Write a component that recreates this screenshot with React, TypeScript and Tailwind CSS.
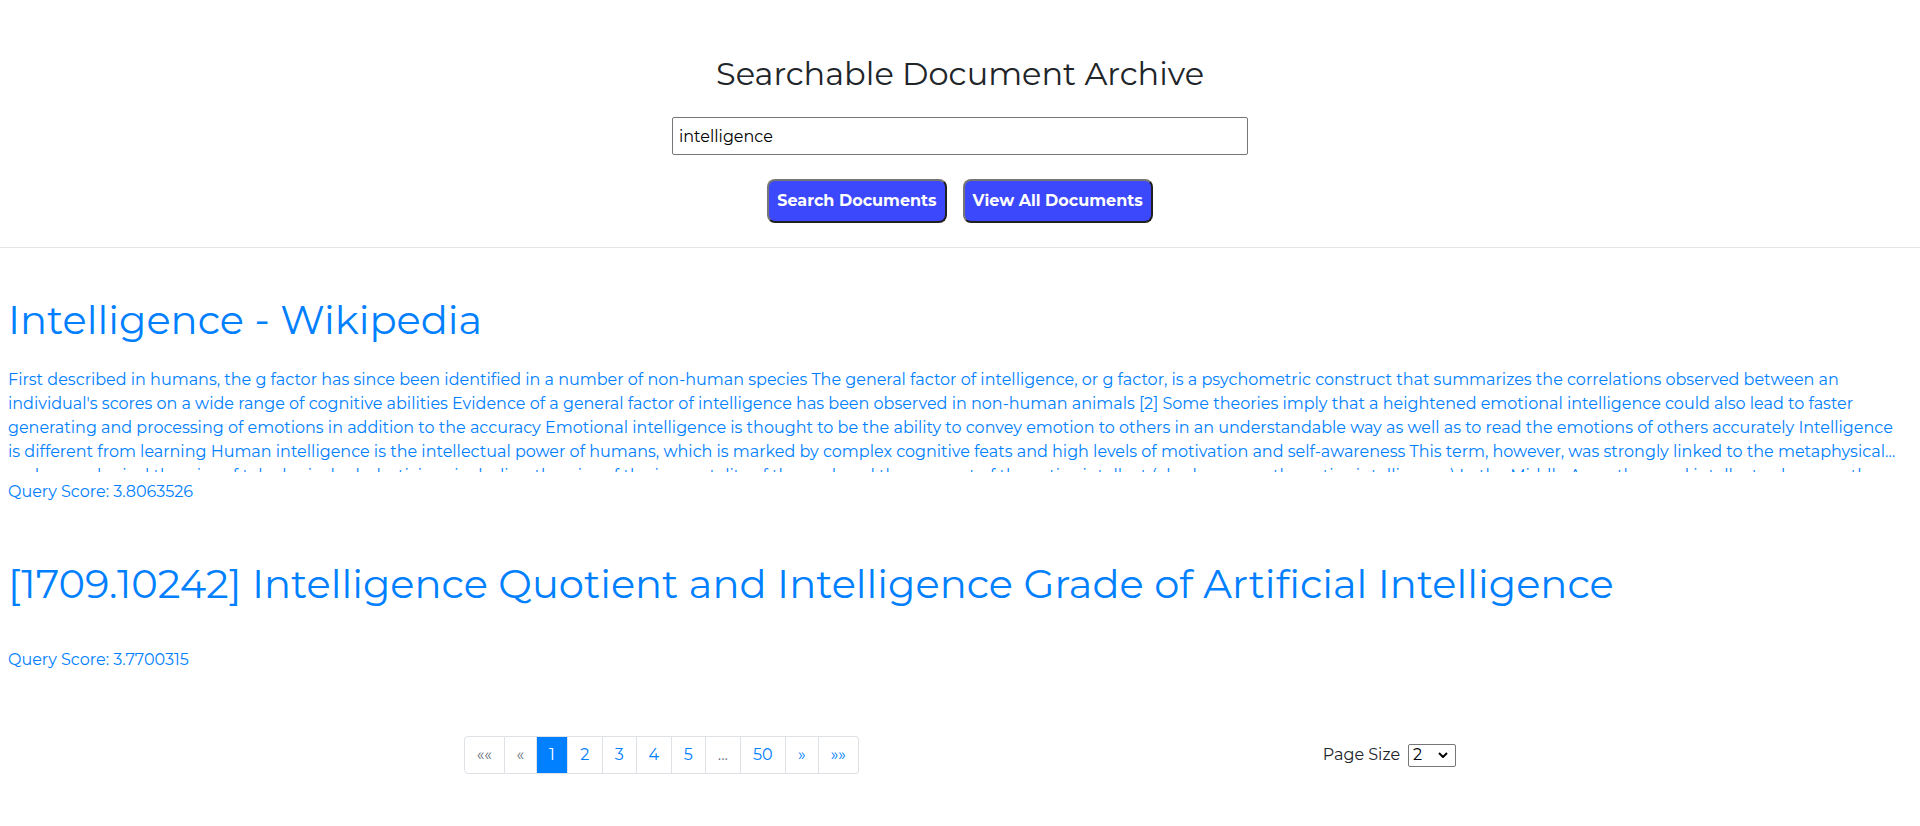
import { useState } from "react";

type Result = { title: string; summary: string; score: string };

const results: Result[] = [
  {
    title: "Intelligence - Wikipedia",
    summary:
      "First described in humans, the g factor has since been identified in a number of non-human species The general factor of intelligence, or g factor, is a psychometric construct that summarizes the correlations observed between an individual's scores on a wide range of cognitive abilities Evidence of a general factor of intelligence has been observed in non-human animals [2] Some theories imply that a heightened emotional intelligence could also lead to faster generating and processing of emotions in addition to the accuracy Emotional intelligence is thought to be the ability to convey emotion to others in an understandable way as well as to read the emotions of others accurately Intelligence is different from learning Human intelligence is the intellectual power of humans, which is marked by complex cognitive feats and high levels of motivation and self-awareness This term, however, was strongly linked to the metaphysical and cosmological theories of teleological scholasticism, including theories of the immortality of the soul, and the concept of the active intellect (also known as the active intelligence) In the Middle Ages, the word intellectus became the scholarly technical term for understanding",
    score: "3.8063526",
  },
  {
    title: "[1709.10242] Intelligence Quotient and Intelligence Grade of Artificial Intelligence",
    summary: "",
    score: "3.7700315",
  },
];

const pages = [
  { label: "««", style: "w-[41px] rounded-l border-l text-[#6c757d]", name: "First page", disabled: true },
  { label: "«", style: "w-8 text-[#6c757d]", name: "Previous page", disabled: true },
  { label: "1", style: "w-[31px] border-[#0080ff] bg-[#0080ff] text-white", name: "Page 1" },
  { label: "2", style: "w-[35px] text-[#0080ff]", name: "Page 2" },
  { label: "3", style: "w-[34px] text-[#0080ff]", name: "Page 3" },
  { label: "4", style: "w-[35px] text-[#0080ff]", name: "Page 4" },
  { label: "5", style: "w-[34px] text-[#0080ff]", name: "Page 5" },
  { label: "...", style: "w-[35px] text-[#6c757d]", name: "More pages", disabled: true },
  { label: "50", style: "w-[45px] text-[#0080ff]", name: "Page 50" },
  { label: "»", style: "w-[33px] text-[#0080ff]", name: "Next page" },
  { label: "»»", style: "w-10 rounded-r text-[#0080ff]", name: "Last page" },
];

const buttonStyle =
  "h-11 rounded-lg border-2 border-t-[#767676] border-r-[#212121] border-b-[#212121] border-l-[#767676] bg-[#3b48fb] px-2 text-center font-bold text-white";

export default function App() {
  const [query, setQuery] = useState("intelligence");
  const [size, setSize] = useState("2");
  return (
    <div className="overflow-x-hidden bg-white font-['Montserrat','Inter',sans-serif] text-base leading-6 text-[#212529] [font-variant-ligatures:none]">
      <header className="flex flex-col items-center border-b border-[#e5e5e5] pt-[54px] pb-6">
        <h2 className="text-[32px] leading-10">Searchable Document Archive</h2>
        <input
          aria-label="Search query"
          value={query}
          onChange={(e) => setQuery(e.target.value)}
          className="mt-[23px] h-[38px] w-[30%] rounded-[2px] border border-[#767676] px-1.5 text-black"
        />
        <div className="mt-6 flex gap-4">
          <button type="button" className={buttonStyle}>Search Documents</button>
          <button type="button" className={buttonStyle}>View All Documents</button>
        </div>
      </header>
      <main className="pr-3 pl-2 text-[#0080ff]">
        {results.map((r) => (
          <a key={r.title} href="#result" className="block pt-12 pb-2">
            <h1 className="text-[40px] leading-12">{r.title}</h1>
            <p className="mt-6 line-clamp-4 pb-2">{r.summary}</p>
            <p className="mt-2">Query Score: {r.score}</p>
          </a>
        ))}
      </main>
      <footer className="mt-14 flex items-center justify-evenly pb-12">
        <nav aria-label="Pagination" className="flex">
          {pages.map((p) => (
            <button
              key={p.name}
              type="button"
              aria-label={p.name}
              disabled={p.disabled}
              className={`h-[38px] border-y border-r border-[#dee2e6] text-center ${p.style}`}
            >
              {p.label}
            </button>
          ))}
        </nav>
        <div className="flex items-center gap-2">
          <label htmlFor="page-size">Page Size</label>
          <div className="relative flex">
            <select
              id="page-size"
              value={size}
              onChange={(e) => setSize(e.target.value)}
              className="h-[23px] w-12 appearance-none rounded-[2px] border border-[#767676] bg-white pl-1 leading-5 text-black"
            >
              <option>2</option>
              <option>5</option>
              <option>10</option>
            </select>
            <svg
              viewBox="0 0 10 6"
              className="pointer-events-none absolute top-2 right-2 h-1.5 w-2.5"
              fill="none"
              stroke="black"
              strokeWidth="2"
            >
              <path d="M1 1l4 4 4-4" />
            </svg>
          </div>
        </div>
      </footer>
    </div>
  );
}
